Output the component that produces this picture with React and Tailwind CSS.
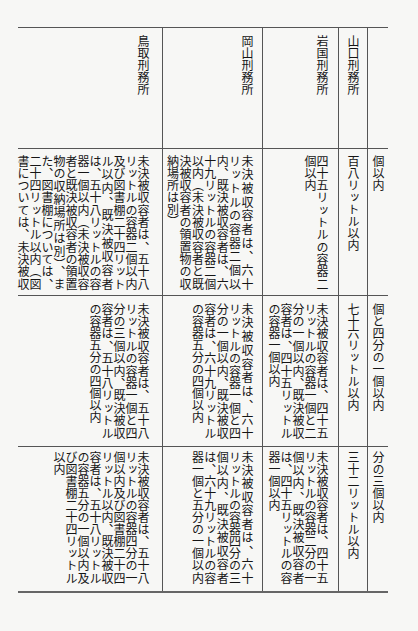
import React from "react";

const rows = [
  {
    pt: "pt-[6px]",
    h: "h-[135px]",
    cells: [
      {
        lines: [
          "未決被収容者は、五十八",
          "リットルの容器二個以内",
          "及び図書棚二十四リット",
          "ル以内、既決被収容者",
          "は、五十八リットルの容",
          "器一個以内（未決被収容",
          "者と既決被収容者の領置",
          "物の収納場所は別）、ま",
          "た、図書棚については、",
          "二十四リットル以内（図",
          "書については、未決被収",
        ],
      },
      {
        lines: [
          "未決被収容者は、六十",
          "リットルの容器二個以",
          "内、既決被収容者は、六",
          "十九リットルの容器二個",
          "以内（未決被収容者と既",
          "決被収容者の領置物の収",
          "納場所は別）",
        ],
        tail: true,
      },
      { lines: ["四十五リットルの容器二", "個以内"], tail: true },
      { lines: ["百八リットル以内"], plain: true },
      { lines: ["個以内"], plain: true },
    ],
  },
  {
    pt: "pt-[7px]",
    h: "h-[136px]",
    cells: [
      {
        lines: [
          "未決被収容者は、五十八",
          "リットルの容器一個と四",
          "分の三個以内、既決被収",
          "容者は、五十八リットル",
          "の容器五分の四個以内",
        ],
        tail: true,
      },
      {
        lines: [
          "未決被収容者は、六十",
          "リットルの容器一個と四",
          "分の一個以内、既決被収",
          "容者は、六十九リットル",
          "の容器五分の四個以内",
        ],
        tail: true,
      },
      {
        lines: [
          "未決被収容者は、四十五",
          "リットルの容器一個と二",
          "分の一個以内、既決被収",
          "容者は、四十五リットル",
          "の容器一個以内",
        ],
        tail: true,
      },
      { lines: ["七十六リットル以内"], plain: true },
      { lines: ["個と四分の一個以内"], plain: true },
    ],
  },
  {
    pt: "pt-[4px]",
    h: "h-[133px]",
    cells: [
      {
        lines: [
          "未決被収容者は、五十八",
          "リットルの容器四分の一",
          "個以内及び図書棚二十四",
          "リットル以内、既決被収",
          "容者は、五十八リットル",
          "の容器五分の一個以内及",
          "び図書棚二十四リットル",
          "以内",
        ],
        tail: true,
      },
      {
        lines: [
          "未決被収容者は、六十",
          "リットルの容器四分の三",
          "個以内、既決被収容者",
          "は、六十九リットルの容",
          "器一個と五分の一個以内",
        ],
      },
      {
        lines: [
          "未決被収容者は、四十五",
          "リットルの容器二分の一",
          "個以内、既決被収容者",
          "は、四十五リットルの容",
          "器一個以内",
        ],
        tail: true,
      },
      { lines: ["三十二リットル以内"], plain: true },
      { lines: ["分の三個以内"], plain: true },
    ],
  },
];

const heads = ["鳥取刑務所", "岡山刑務所", "岩国刑務所", "山口刑務所", ""];

// per column: right padding, leading, left border
const colStyle = [
  { box: "pr-[13px] justify-end", lead: "leading-[12px]" },
  { box: "border-l border-[#555] pr-[9px] justify-end", lead: "leading-[12.4px]" },
  { box: "border-l border-[#555] pr-[10px] justify-end", lead: "leading-[12px]" },
  { box: "border-l border-[#555] justify-center", lead: "leading-[12px]" },
  { box: "border-l border-[#555] justify-center", lead: "leading-[12px]" },
];

const headPad = ["pr-[9px]", "pr-[9px]", "pr-[10px]", "", ""];

function VText({ lines, tail, plain, lead, h }) {
  return (
    <div className={`[writing-mode:vertical-rl] whitespace-nowrap ${lead} ${plain ? "" : h}`}>
      {lines.map((line, i) => {
        const just = !plain && !(tail && i === lines.length - 1);
        return (
          <div key={i} className={just ? "[text-align-last:justify]" : ""}>
            {line}
          </div>
        );
      })}
    </div>
  );
}

export default function App() {
  return (
    <div className="w-[418px] h-[631px] bg-[#f7f7f5] pt-[27px] pl-[18px] text-[12px] text-[#151515] font-['Noto_Sans_CJK_JP',sans-serif]">
      <div className="grid grid-cols-[144px_100px_76px_29px_21px] grid-rows-[121px_147px_151px_145px] border-b-2 border-[#666] w-[370px]">
        {heads.map((t, i) => (
          <div key={i} className={`flex items-start border-t border-[#555] pt-[7px] ${colStyle[i].box} ${headPad[i]}`}>
            {t && <div className="[writing-mode:vertical-rl] leading-[12px]">{t}</div>}
          </div>
        ))}
        {rows.map((r, ri) =>
          r.cells.map((c, ci) => (
            <div key={`${ri}-${ci}`} className={`flex items-start border-t border-[#555] ${r.pt} ${colStyle[ci].box}`}>
              <VText {...c} lead={colStyle[ci].lead} h={r.h} />
            </div>
          ))
        )}
      </div>
    </div>
  );
}
